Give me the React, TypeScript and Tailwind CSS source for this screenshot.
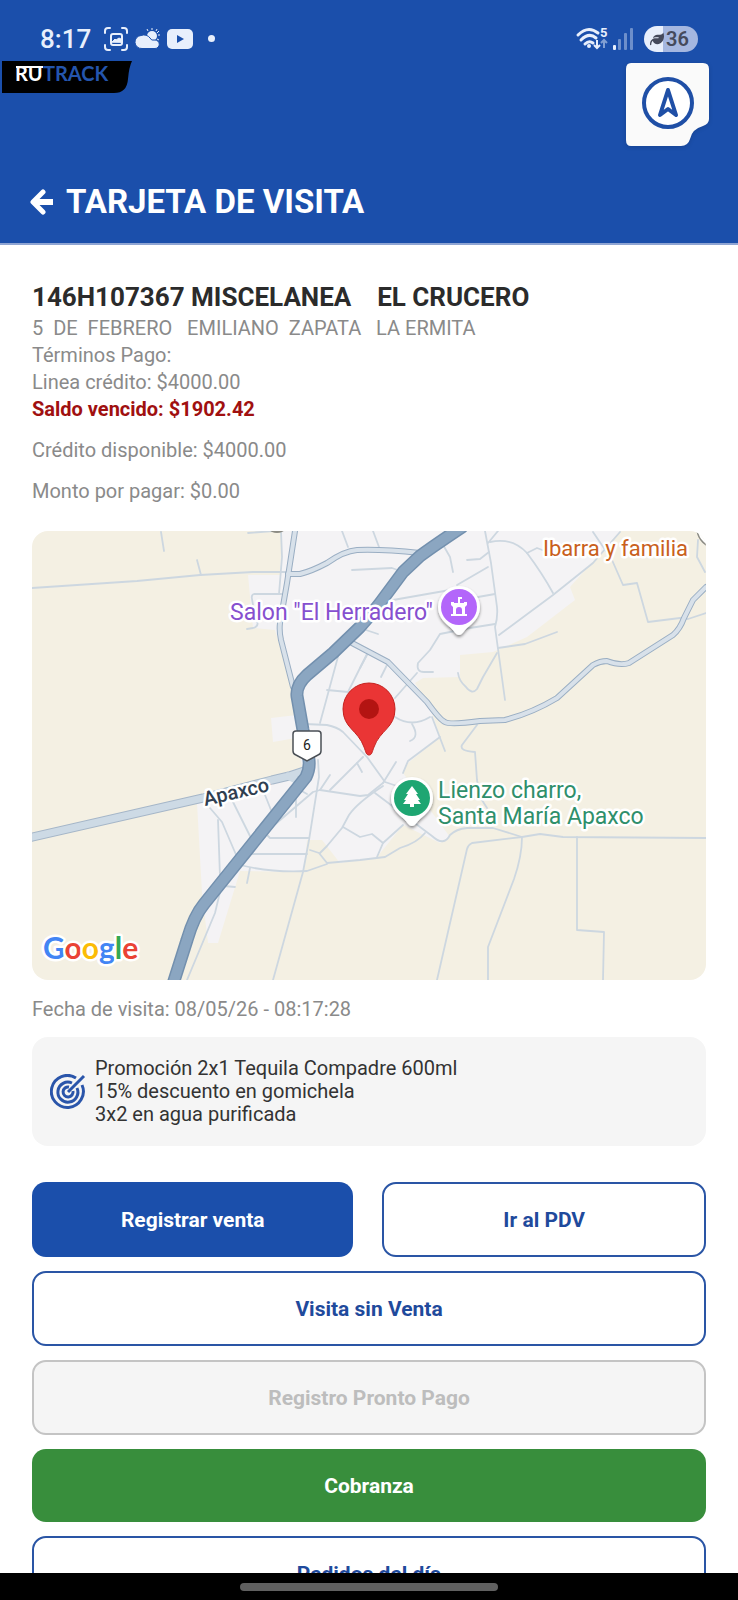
import React from 'react';
import { FaLeaf } from 'react-icons/fa6';

const roboto = "font-['Roboto','Liberation_Sans',sans-serif]";

// Thin village streets, drawn as simple strokes
const streets = [
  'M0 57L105 50L168 44L221 41L256 41',
  'M129 1L132 20',
  'M165 29L169 44',
  'M216 2L241 0',
  'M249 0L250 26L247 63',
  'M250 63H222Q219 64 220 68L223 86Q229 95 221 97L215 98',
  'M310 0L316 16',
  'M341 0L347 16',
  'M320 39L360 37L371 41',
  'M307 122L288 192',
  'M335 123L316 161L295 159',
  'M273 193L295 194Q305 196 311 201L335 226L353 251L371 257',
  'M328 97L346 103',
  'M453 0L459 32L465 76Q466 86 463 96L473 169',
  'M466 0L456 12',
  'M458 11Q480 6 495 22Q510 42 521 62',
  'M495 22L505 17L513 20',
  'M435 29L448 28L457 21',
  'M425 54L456 36',
  'M361 69L418 59',
  'M446 66L463 63',
  'M410 12L418 26L421 41',
  'M463 93L438 97L408 103L398 119L386 132Q384 141 392 141L401 141',
  'M363 167L385 142',
  'M356 132L349 146',
  'M335 124L328 137',
  'M467 104L521 64L561 32L588 1',
  'M466 117L493 113L525 101',
  'M465 122L451 146L445 158Q440 164 434 156Q427 150 426 142',
  'M561 1L580 29L591 54L605 52L616 91L648 87L656 88L674 82',
  'M666 9L665 26L673 41',
  'M363 186Q380 197 398 186',
  'M380 193Q388 206 378 210',
  'M400 186L413 220',
  'M408 206L376 230L371 242',
  'M445 194L430 214Q427 220 443 221L445 249L448 266L455 277',
  'M286 229L287 246L277 309L271 341L241 449',
  'M331 226L298 259',
  'M325 232L330 241',
  'M268 259L275 263',
  'M288 259L328 265L336 264L351 252',
  'M298 244L288 259L281 261L233 302L238 307H277',
  'M351 255Q325 272 317 284L310 297L295 315L288 322',
  'M278 319L287 322L295 332L328 329L353 326L368 317Q385 312 393 302',
  'M311 296L328 306L340 303L351 312L345 326',
  'M208 334Q240 342 275 340L295 333',
  'M220 323H275',
  'M233 264L239 279',
  'M264 267V286',
  'M201 271L219 307',
  'M178 277L190 291L205 326',
  'M186 289L188 346',
  'M188 361L183 382L155 449',
  'M218 337L215 352',
  'M192 355L203 356',
  'M364 231L351 252',
  'M371 294L351 312',
  'M343 262L400 305Q412 316 418 304Q424 298 435 297L461 297L490 306L508 303L531 306L674 307',
  'M490 306L440 312Q436 314 435 318L405 449',
  'M490 306Q490 325 482 348L456 416V449',
  'M545 306V399L572 401L571 449',
];

// Local roads with a darker casing
const roads = [
  'M263 0L255 52L248 92Q247 100 249 109L261 156',
  'M256 43H268Q280 40 295 32Q312 20 325 19Q350 18 388 22',
  'M320 112L356 131L395 171Q408 189 413 191Q418 194 448 190L473 189Q500 182 525 167L561 134Q568 130 575 130Q588 135 597 132L641 104Q648 98 652 87L661 69L674 56',
];

const highway =
  'M430 -4Q400 16 388 25L371 41L348 72Q338 85 328 96L301 122L275 144Q264 154 265 165L271 199L277 229Q278 238 274 246L221 312L172 373Q162 385 155 409L141 453';

const urban =
  'M250 0L248 44L216 44L221 97L243 99L262 160L265 184L239 187L241 211L264 207L270 236L165 272L170 362L176 412L186 412L208 340L272 341L275 309H290L308 332L345 326L371 294L408 312L418 306L371 242L376 232L408 206L398 176L383 152L391 147L428 146V124L461 121L495 106L543 69L538 56L588 0Z';

const PlacePin = ({ x, y, color, children }: { x: number; y: number; color: string; children: React.ReactNode }) => (
  <g transform={`translate(${x} ${y})`}>
    <path d="M0 28C-3 28 -4 25 -8 21C-14 16 -21 10 -21 0A21 21 0 0 1 21 0C21 10 14 16 8 21C4 25 3 28 0 28Z" fill="#fff" filter="url(#pinShadow)" />
    <circle r="18" fill={color} />
    {children}
  </g>
);

const VisitMap = () => (
  <svg
    viewBox="0 0 674 449"
    preserveAspectRatio="xMidYMid slice"
    role="img"
    aria-label="Mapa de la visita"
    className="block w-full rounded-2xl font-['Roboto','Liberation_Sans',sans-serif]"
  >
    <defs>
      <filter id="pinShadow" x="-30%" y="-30%" width="160%" height="160%">
        <feDropShadow dx="0" dy="2" stdDeviation="1.5" floodOpacity="0.45" />
      </filter>
    </defs>
    <rect width="674" height="449" fill="#f4f0e3" />
    <path d={urban} fill="#f4f3f5" />
    <g fill="none" strokeLinecap="round" strokeLinejoin="round">
      {streets.map((d) => (
        <path key={d} d={d} stroke="#cdd7e0" strokeWidth="1.8" />
      ))}
      {roads.map((d) => (
        <path key={d} d={d} stroke="#9aaec3" strokeWidth="6" />
      ))}
      {roads.map((d) => (
        <path key={d} d={d} stroke="#d8e1ea" strokeWidth="4" />
      ))}
      <path d="M-4 307L171 267L240 249L257 245L272 240" stroke="#a5b6c8" strokeWidth="9" />
      <path d="M-4 307L171 267L240 249L257 245L272 240M256 245L270 252" stroke="#cddae5" strokeWidth="7" />
      <path d={highway} stroke="#7390ae" strokeWidth="13" />
      <path d={highway} stroke="#8ba6c1" strokeWidth="10" />
    </g>
    <ellipse cx="245" cy="-1" rx="7" ry="3" fill="#8b8b84" />
    <circle cx="685" cy="-3" r="20" fill="#fff" stroke="#8b8b84" strokeWidth="1.5" />

    {/* Route shield */}
    <path d="M264 200H286Q289 200 289 203V220Q289 223 286 224L275 230L264 224Q261 223 261 220V203Q261 200 264 200Z" fill="#fff" stroke="#4a4f55" strokeWidth="1.5" />
    <text x="275" y="219" fontSize="14" fill="#222" textAnchor="middle">6</text>

    {/* Venue */}
    <PlacePin x={427} y={76} color="#b366fa">
      <path d="M-8 -5V-2L-6 0V7H-8V9H8V7H6V0L8 -2V-5H5V-4H1V-8H3V-10H-1V-4H-5V-5ZM-3 7V3A3 3 0 0 1 3 3V7Z" fill="#fff" fillRule="evenodd" />
    </PlacePin>
    {/* Park */}
    <PlacePin x={380} y={267} color="#1ea672">
      <path d="M0 -12L6 -4H4L8 2H6L9 6H2V9H-2V6H-9L-6 2H-8L-4 -4H-6Z" fill="#fff" />
    </PlacePin>

    {/* Client location */}
    <path d="M337 224C334 224 334 221 332 216C326 199 311 197 311 178A26 26 0 0 1 363 178C363 197 348 199 342 216C340 221 340 224 337 224Z" fill="#ea3535" stroke="#c5221f" strokeWidth="1" />
    <circle cx="337" cy="178" r="10" fill="#b31412" />

    <g stroke="#fff" strokeWidth="5" strokeLinejoin="round" paintOrder="stroke">
      <text x="198" y="89" fontSize="23" fill="#8650cf">Salon "El Herradero"</text>
      <text x="511" y="25" fontSize="22" fill="#c9601c">Ibarra y familia</text>
      <g fontSize="23" fill="#2f8f6b">
        <text x="406" y="267">Lienzo charro,</text>
        <text x="406" y="293">Santa María Apaxco</text>
      </g>
      <text transform="translate(173 275) rotate(-13)" fontSize="20" fontWeight="500" fill="#2f3e50">Apaxco</text>
      <text x="11" y="428" fontSize="30" fontWeight="700" className="font-['Lato',sans-serif]">
        <tspan fill="#4285f4">G</tspan>
        <tspan fill="#ea4335">o</tspan>
        <tspan fill="#fbbc05">o</tspan>
        <tspan fill="#4285f4">g</tspan>
        <tspan fill="#34a853">l</tspan>
        <tspan fill="#ea4335">e</tspan>
      </text>
    </g>
  </svg>
);

const StatusBar = () => (
  <div className="flex h-[61px] items-center justify-between px-10 pt-4 text-[#e8effc]">
    <div className="flex items-center">
      <span className="w-16 text-[26px] leading-8 font-medium">8:17</span>
      {/* Screenshot */}
      <svg viewBox="0 0 24 24" className="size-6" fill="none" stroke="currentColor" strokeWidth="2" strokeLinecap="round">
        <path d="M1 6V4Q1 1 4 1H6M18 1H20Q23 1 23 4V6M23 18V20Q23 23 20 23H18M6 23H4Q1 23 1 20V18" />
        <rect x="7" y="7" width="11" height="11" rx="2" />
        <path d="M8 15L11 12L12 13L15 11L17 12V15Z" fill="currentColor" strokeWidth="1" />
      </svg>
      {/* Weather */}
      <svg viewBox="0 0 24 24" className="ml-2 size-6 overflow-visible" fill="currentColor">
        <circle cx="16" cy="9" r="5" />
        <path d="M16 3V1M20 4L21 2M22 8H24M21 12L23 13M12 4L11 2M21 6L23 4" stroke="currentColor" strokeWidth="1" />
        <path d="M6 21.500A6 6 0 0 1 5 8.500A7 6 0 0 1 14 11Q15 14 19 13A4 4 0 0 1 19 21.500Z" stroke="#1b4fab" strokeWidth="1" />
      </svg>
      {/* Video */}
      <svg viewBox="0 0 28 20" className="ml-1.5 h-5 w-7">
        <rect x="1" width="26" height="20" rx="5" fill="currentColor" />
        <path d="M11 6L18 10L11 14Z" fill="#1b4fab" />
      </svg>
      <span className="ml-3.5 size-[7px] rounded-full bg-current" />
    </div>
    <div className="flex items-center">
      <svg viewBox="0 0 32 24" className="h-6 w-8 overflow-visible" fill="none" stroke="currentColor" strokeWidth="3">
        <path d="M2 8Q12 -2 22 6M5 13Q13 5 20 11M9 17Q13 13 17 16" strokeLinecap="round" />
        <circle cx="13" cy="19" r="2" fill="currentColor" stroke="none" />
        <path d="M21 13V21M18 18L21 21L24 18" strokeWidth="2" />
        <path d="M28 21V13M25 16L28 13L31 16" strokeWidth="2" opacity="0.5" />
        <text x="24" y="10" fontSize="13" fontWeight="700" fill="currentColor" stroke="none">5</text>
      </svg>
      <svg viewBox="0 0 22 24" className="ml-1 h-6 w-[22px]" fill="currentColor">
        <rect x="1" y="18" width="3" height="5" rx="1" />
        <g opacity="0.4">
          <rect x="6" y="12" width="3" height="11" rx="1" />
          <rect x="12" y="6" width="3" height="17" rx="1" />
          <rect x="18" y="1" width="3" height="22" rx="1" />
        </g>
      </svg>
      <div className="ml-2.5 flex h-[26px] w-[54px] items-center overflow-hidden rounded-full bg-[linear-gradient(90deg,#e8effc_36%,#a5b7e0_36%)] pl-1.5 text-[#454a5c]">
        <FaLeaf className="size-3.5" />
        <span className="ml-0.5 text-[20px] leading-6 font-semibold">36</span>
      </div>
    </div>
  </div>
);

const RutrackLogo = () => (
  <svg viewBox="0 0 132 32" className="ml-0.5 h-8 w-[132px] overflow-visible" role="img" aria-label="RUTRACK">
    <path d="M0 0H130Q127 6 126 18Q125 32 112 32H0Z" fill="#000" />
    <g fontSize="20" fontWeight="700" className="font-['Lato',sans-serif]">
      <text x="13" y="20" fill="#fff">RU</text>
      <text x="41" y="20" fill="#2455ad">TRACK</text>
    </g>
    <path d="M14 6H41" stroke="#fff" strokeWidth="2" />
  </svg>
);

const TargetIcon = () => (
  <svg viewBox="0 0 36 36" className="size-9 shrink-0" fill="none" stroke="#2a55aa" strokeWidth="3">
    <path d="M26 4A16 16 0 1 0 32 11" />
    <path d="M22 9A10 10 0 1 0 27 14" />
    <path d="M19 13A5 5 0 1 0 23 17" />
    <path d="M18 18L34 2" />
  </svg>
);

const baseButton = 'flex w-full items-center justify-center rounded-[14px] text-[21px] leading-6 font-bold';
const outline = 'border-2 border-[#2a55a5] bg-white text-[#1f4a9c]';

export default function App() {
  return (
    <div className={`flex h-screen flex-col overflow-hidden bg-white ${roboto}`}>
      <header className="shrink-0 border-b-2 border-[#8fa5d3] bg-[#1b4fab] text-white">
        <StatusBar />
        <div className="flex items-start justify-between pr-7">
          <RutrackLogo />
          <button type="button" aria-label="Navegar" className="mt-0.5">
            <svg viewBox="1 0 84 84" className="size-[84px] drop-shadow-sm">
              <path d="M6 0H78Q84 0 84 6V56Q84 61 78 63Q67 66 65 76Q63 83 56 83H6Q1 83 1 77V6Q1 0 6 0Z" fill="#fafafa" />
              <circle cx="43" cy="40" r="24" fill="#fff" stroke="#1f4fa6" strokeWidth="4" />
              <path d="M43 27L35 52L43 46L51 52Z" fill="none" stroke="#1f4fa6" strokeWidth="4" strokeLinejoin="round" />
            </svg>
          </button>
        </div>
        <div className="flex items-center gap-3 px-7 pt-[35px] pb-[21px]">
          <button type="button" aria-label="Regresar">
            <svg viewBox="0 0 26 26" className="size-[26px]" fill="none" stroke="currentColor" strokeWidth="5" strokeLinecap="round" strokeLinejoin="round">
              <path d="M15 3L5 13L15 23" />
              <path d="M7 13H25" strokeLinecap="butt" strokeWidth="6" />
            </svg>
          </button>
          <h1 className="text-[33px] leading-10 font-bold">TARJETA DE VISITA</h1>
        </div>
      </header>

      <main className="min-h-0 flex-1 overflow-hidden px-8 pt-9 text-[20px] leading-[27px] text-[#8a8a8a]">
        <h2 className="mb-px text-[26px] leading-[33px] font-bold whitespace-pre-wrap text-[#2b2b2b]">
          {'146H107367 MISCELANEA    EL CRUCERO'}
        </h2>
        <p className="whitespace-pre-wrap">{'5  DE  FEBRERO   EMILIANO  ZAPATA   LA ERMITA'}</p>
        <p>Términos Pago:</p>
        <p>Linea crédito: $4000.00</p>
        <p className="font-bold text-[#a01010]">Saldo vencido: $1902.42</p>
        <p className="mt-3.5">Crédito disponible: $4000.00</p>
        <p className="mt-3.5 mb-[26px]">Monto por pagar: $0.00</p>

        <VisitMap />

        <p className="mt-4">Fecha de visita: 08/05/26 - 08:17:28</p>

        <section className="mt-3.5 flex items-center gap-[9px] rounded-2xl bg-[#f5f5f5] px-[18px] py-5">
          <TargetIcon />
          <div className="leading-[23px] text-[#333]">
            <p>Promoción 2x1 Tequila Compadre 600ml</p>
            <p>15% descuento en gomichela</p>
            <p>3x2 en agua purificada</p>
          </div>
        </section>

        <div className="mt-9 flex flex-col gap-3.5">
          <div className="flex gap-[29px]">
            <button type="button" className={`${baseButton} h-[75px] bg-[#1b4fab] text-white`}>Registrar venta</button>
            <button type="button" className={`${baseButton} h-[75px] ${outline}`}>Ir al PDV</button>
          </div>
          <button type="button" className={`${baseButton} h-[75px] ${outline}`}>Visita sin Venta</button>
          <button type="button" disabled className={`${baseButton} h-[75px] border-2 border-[#c4c4c4] bg-[#f5f5f5] text-[#bdbdbd]`}>
            Registro Pronto Pago
          </button>
          <button type="button" className={`${baseButton} h-[73px] bg-[#388e3c] text-white`}>Cobranza</button>
          <button type="button" className={`${baseButton} h-[75px] ${outline}`}>Pedidos del día</button>
        </div>
      </main>

      <footer className="flex h-[27px] shrink-0 items-center justify-center bg-black">
        <div className="h-2 w-[35%] rounded-full bg-[#606060]" />
      </footer>
    </div>
  );
}
